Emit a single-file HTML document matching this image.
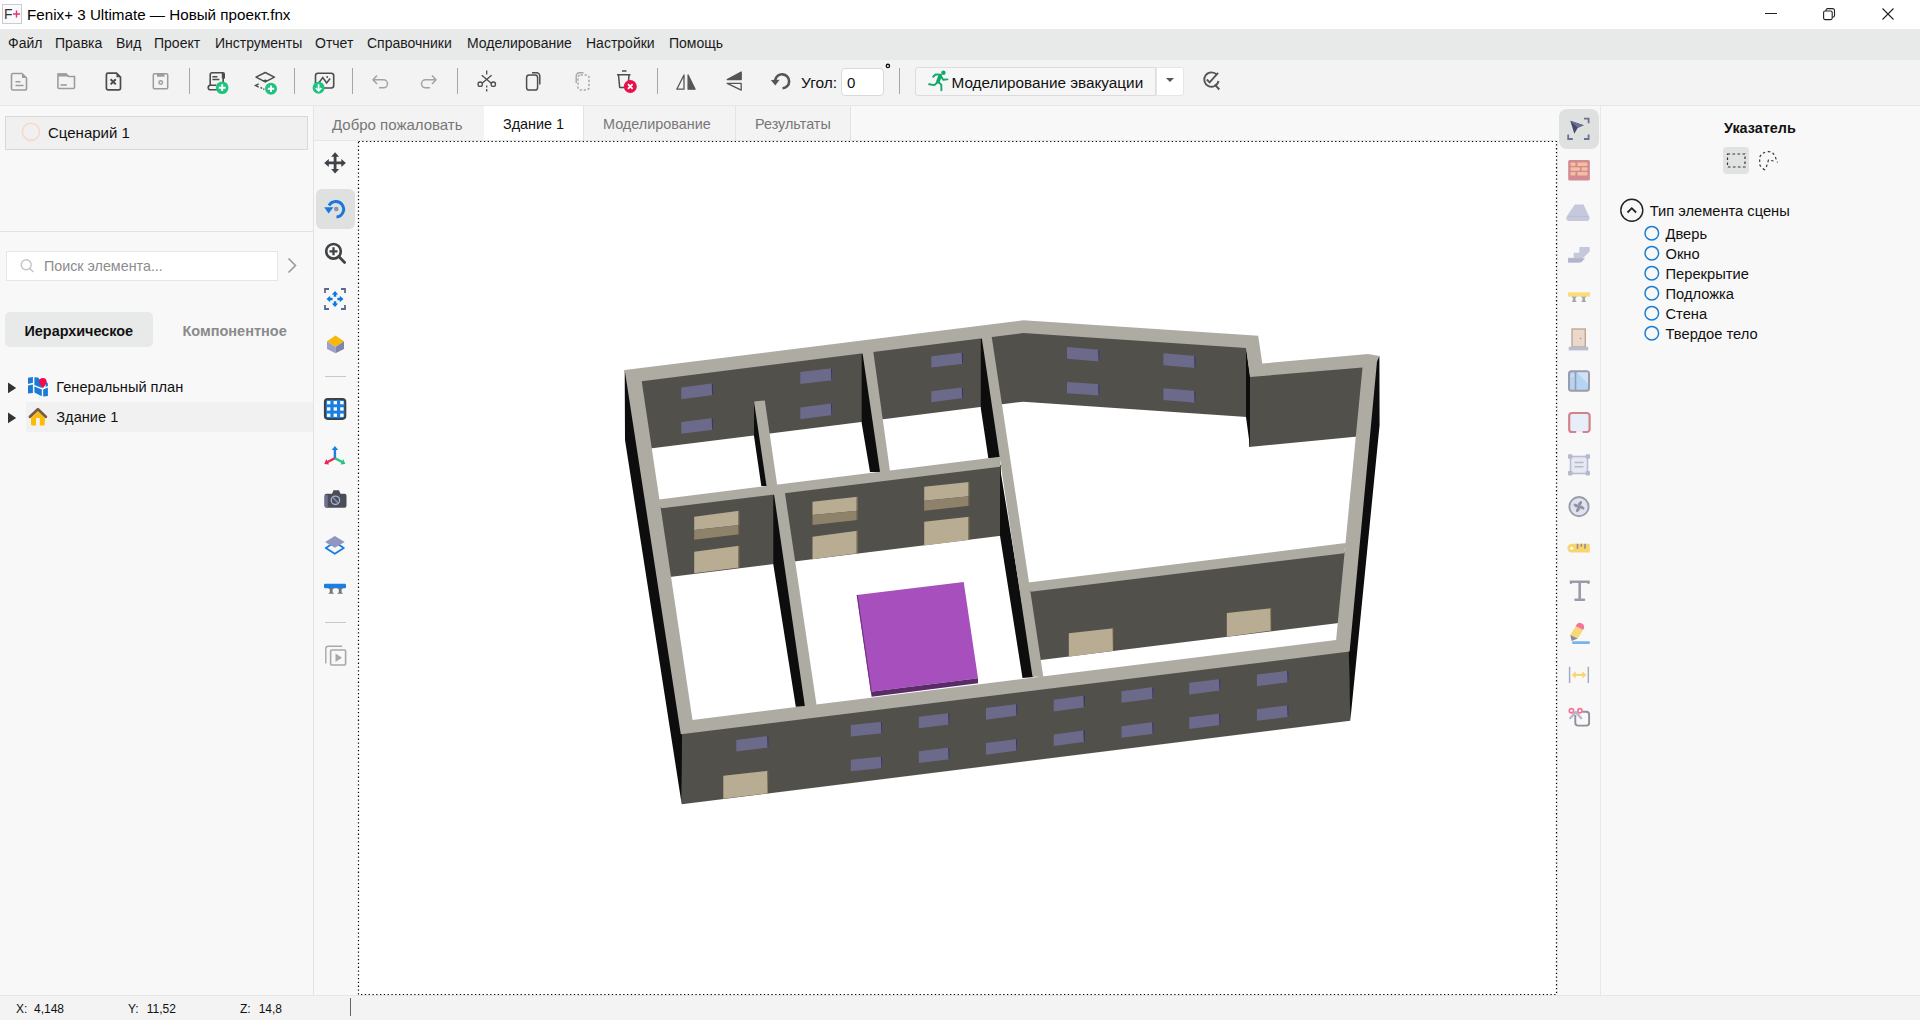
<!DOCTYPE html>
<html><head><meta charset="utf-8"><style>
html,body{margin:0;padding:0;width:1920px;height:1020px;overflow:hidden;background:#f8f8f8;font-family:"Liberation Sans", sans-serif;}
</style></head><body>
<div style="position:absolute;left:0px;top:0px;width:1920px;height:29px;background:#ffffff;"></div><div style="position:absolute;left:0px;top:29px;width:1920px;height:31px;background:#e8e9e9;"></div><div style="position:absolute;left:0px;top:60px;width:1920px;height:45px;background:#f3f3f3;"></div><div style="position:absolute;left:0px;top:105px;width:1920px;height:1px;background:#e6e7e7;"></div><div style="position:absolute;left:0px;top:106px;width:1920px;height:889px;background:#f8f8f8;"></div><div style="position:absolute;left:313px;top:106px;width:1px;height:889px;background:#e3e3e3;"></div><div style="position:absolute;left:1600px;top:106px;width:1px;height:889px;background:#e8e8e8;"></div><div style="position:absolute;left:1557px;top:141px;width:1px;height:854px;background:#ececec;"></div><div style="position:absolute;left:0px;top:995px;width:1920px;height:1px;background:#e6e6e6;"></div><div style="position:absolute;left:0px;top:996px;width:1920px;height:24px;background:#f3f3f3;"></div><div style="position:absolute;left:314px;top:106px;width:537px;height:34px;background:#f3f3f3;"></div><div style="position:absolute;left:484px;top:106px;width:99px;height:34px;background:#ffffff;"></div><div style="position:absolute;left:583px;top:106px;width:1px;height:34px;background:#e3e3e3;"></div><div style="position:absolute;left:735px;top:106px;width:1px;height:34px;background:#e3e3e3;"></div><div style="position:absolute;left:850px;top:106px;width:1px;height:34px;background:#e3e3e3;"></div><div style="position:absolute;left:314px;top:140px;width:1243px;height:1px;background:#e5e7e7;"></div><div style="position:absolute;left:358px;top:141px;width:1199px;height:853.5px;background:#ffffff;"></div><svg style="position:absolute;left:0;top:0" width="1920" height="1020"><rect x="358.5" y="141.5" width="1198" height="853" fill="none" stroke="#000" stroke-width="1.2" stroke-dasharray="1.3 2.5"/></svg><div style="position:absolute;left:27px;top:7.13px;font-size:15.2px;line-height:15.2px;color:#000;font-weight:400;white-space:nowrap;">Fenix+ 3 Ultimate — Новый проект.fnx</div><svg style="position:absolute;left:2px;top:4px;overflow:visible" width="20" height="20" viewBox="0 0 20 20"><rect x="0.5" y="0.5" width="19" height="19" fill="#fafafa" stroke="#c9cbd6"/><text x="2" y="15" font-family="Liberation Sans" font-size="14" fill="#333">F</text><path d="M11 10h7M14.5 6.5v7" stroke="#e8336b" stroke-width="1.4"/></svg><svg style="position:absolute;left:1765px;top:13px;overflow:visible" width="12" height="1" viewBox="0 0 12 1"><rect x="0" y="0" width="12" height="1" fill="#222"/></svg><svg style="position:absolute;left:1823px;top:8px;overflow:visible" width="12" height="12" viewBox="0 0 12 12"><rect x="0.6" y="3" width="8.6" height="8.6" rx="1.5" fill="none" stroke="#222" stroke-width="1.1"/><path d="M3 3 V2.2 a1.6 1.6 0 0 1 1.6 -1.6 H9.5 a2 2 0 0 1 2 2 V7.6 a1.6 1.6 0 0 1 -1.6 1.6 H9.2" fill="none" stroke="#222" stroke-width="1.1"/></svg><svg style="position:absolute;left:1882px;top:8px;overflow:visible" width="12" height="12" viewBox="0 0 12 12"><path d="M0.5 0.5 L11.5 11.5 M11.5 0.5 L0.5 11.5" stroke="#222" stroke-width="1.1"/></svg><div style="position:absolute;left:8px;top:36.25px;font-size:14px;line-height:14px;color:#1a1a1a;font-weight:400;white-space:nowrap;">Файл</div><div style="position:absolute;left:55px;top:36.25px;font-size:14px;line-height:14px;color:#1a1a1a;font-weight:400;white-space:nowrap;">Правка</div><div style="position:absolute;left:116px;top:36.25px;font-size:14px;line-height:14px;color:#1a1a1a;font-weight:400;white-space:nowrap;">Вид</div><div style="position:absolute;left:154px;top:36.25px;font-size:14px;line-height:14px;color:#1a1a1a;font-weight:400;white-space:nowrap;">Проект</div><div style="position:absolute;left:215px;top:36.25px;font-size:14px;line-height:14px;color:#1a1a1a;font-weight:400;white-space:nowrap;">Инструменты</div><div style="position:absolute;left:315px;top:36.25px;font-size:14px;line-height:14px;color:#1a1a1a;font-weight:400;white-space:nowrap;">Отчет</div><div style="position:absolute;left:367px;top:36.25px;font-size:14px;line-height:14px;color:#1a1a1a;font-weight:400;white-space:nowrap;">Справочники</div><div style="position:absolute;left:467px;top:36.25px;font-size:14px;line-height:14px;color:#1a1a1a;font-weight:400;white-space:nowrap;">Моделирование</div><div style="position:absolute;left:586px;top:36.25px;font-size:14px;line-height:14px;color:#1a1a1a;font-weight:400;white-space:nowrap;">Настройки</div><div style="position:absolute;left:669px;top:36.25px;font-size:14px;line-height:14px;color:#1a1a1a;font-weight:400;white-space:nowrap;">Помощь</div><svg style="position:absolute;left:0px;top:0px;overflow:visible" width="1" height="1" viewBox="0 0 1 1"><path d="M13 73.5 h9 l4.5 4.5 v10.5 a1.5 1.5 0 0 1 -1.5 1.5 h-12 a1.5 1.5 0 0 1 -1.5 -1.5 v-13.5 a1.5 1.5 0 0 1 1.5 -1.5z" fill="none" stroke="#9c9c9c" stroke-width="1.6"/><path d="M22 73.5 l4.5 4.5 h-4.5z" fill="#9c9c9c"/><path d="M15.5 81.7 h5 M15.5 85.5 h8" stroke="#9c9c9c" stroke-width="1.6"/></svg><svg style="position:absolute;left:0px;top:0px;overflow:visible" width="1" height="1" viewBox="0 0 1 1"><path d="M58 74 h8 l2.5 2.5 h6 v11 a1 1 0 0 1 -1 1 h-14.6 a1 1 0 0 1 -1 -1z" fill="none" stroke="#9c9c9c" stroke-width="1.6"/><path d="M58 73.5 h8.5 l3 3 h-11.5z" fill="#9c9c9c"/><path d="M60.5 85 h6.3" stroke="#9c9c9c" stroke-width="1.6"/></svg><svg style="position:absolute;left:0px;top:0px;overflow:visible" width="1" height="1" viewBox="0 0 1 1"><path d="M108 73.2 h8.5 l4 4 v11 a1.6 1.6 0 0 1 -1.6 1.6 h-10.9 a1.6 1.6 0 0 1 -1.6 -1.6 v-13.4 a1.6 1.6 0 0 1 1.6 -1.6z" fill="none" stroke="#4d4d4d" stroke-width="1.7"/><path d="M116.5 73.2 l4 4 h-4z" fill="#4d4d4d"/><path d="M110.6 79.2 l5.2 5.2 M115.8 79.2 l-5.2 5.2" stroke="#4d4d4d" stroke-width="2"/></svg><svg style="position:absolute;left:0px;top:0px;overflow:visible" width="1" height="1" viewBox="0 0 1 1"><path d="M154.5 73.8 h12 a1.2 1.2 0 0 1 1.2 1.2 v12.6 a1.2 1.2 0 0 1 -1.2 1.2 h-12 a1.2 1.2 0 0 1 -1.2 -1.2 v-12.6 a1.2 1.2 0 0 1 1.2 -1.2z" fill="none" stroke="#9c9c9c" stroke-width="1.5"/><rect x="157" y="73.5" width="7.5" height="3.2" fill="#9c9c9c"/><circle cx="160.7" cy="82.5" r="1.8" fill="none" stroke="#9c9c9c" stroke-width="1.4"/></svg><div style="position:absolute;left:189.0px;top:68px;width:1.2px;height:26px;background:#a6a6a6;"></div><div style="position:absolute;left:294.0px;top:68px;width:1.2px;height:26px;background:#a6a6a6;"></div><div style="position:absolute;left:352.0px;top:68px;width:1.2px;height:26px;background:#a6a6a6;"></div><div style="position:absolute;left:457.0px;top:68px;width:1.2px;height:26px;background:#a6a6a6;"></div><div style="position:absolute;left:657.0px;top:68px;width:1.2px;height:26px;background:#a6a6a6;"></div><div style="position:absolute;left:898.5px;top:68px;width:1.2px;height:26px;background:#a6a6a6;"></div><svg style="position:absolute;left:0px;top:0px;overflow:visible" width="1" height="1" viewBox="0 0 1 1"><path d="M210.2 86 V74.7 a2 2 0 0 1 2 -2 H223" fill="none" stroke="#4d4d4d" stroke-width="1.6"/><path d="M221.8 72 h1.2 a2 2 0 0 1 2 2 v4.6 h-3.2z" fill="#4d4d4d"/><path d="M223.2 78 V84 M217.5 89.8 h-7 a2.3 2.3 0 0 1 0 -4.6 h6" fill="none" stroke="#4d4d4d" stroke-width="1.6"/><path d="M212.4 76.8 h5 M212.4 79.4 h7" stroke="#4d4d4d" stroke-width="1.5"/><circle cx="222.2" cy="87.7" r="6.3" fill="#1ec47e"/><path d="M222.2 84.3 v6.8 M218.8 87.7 h6.8" stroke="#fff" stroke-width="1.9"/></svg><svg style="position:absolute;left:0px;top:0px;overflow:visible" width="1" height="1" viewBox="0 0 1 1"><path d="M265.2 72.5 l9.2 4.6 l-9.2 4.8 l-9.2 -4.8z" fill="none" stroke="#4d4d4d" stroke-width="1.5" stroke-linejoin="round"/><path d="M262.3 80.6 l2.9 -1.2 l2.9 1.2 l-2.9 1.6z" fill="#4d4d4d"/><path d="M258.7 83.9 l-3.2 1.6 l3.2 1.6 M260.5 87.5 l1.6 0.8 M263.2 88.8 l1.2 0.6" fill="none" stroke="#4d4d4d" stroke-width="1.4"/><circle cx="271" cy="88.8" r="6" fill="#1ec47e"/><path d="M271 85.6 v6.4 M267.8 88.8 h6.4" stroke="#fff" stroke-width="1.9"/></svg><svg style="position:absolute;left:0px;top:0px;overflow:visible" width="1" height="1" viewBox="0 0 1 1"><rect x="315.5" y="73.2" width="18.2" height="14.8" rx="2.5" fill="none" stroke="#4d4d4d" stroke-width="1.6"/><path d="M318 84 l4.8 -6.5 l3.8 5.5 l3.5 -4.5" fill="none" stroke="#4d4d4d" stroke-width="1.5"/><circle cx="327.2" cy="77" r="0.9" fill="#4d4d4d"/><circle cx="318.6" cy="87.7" r="6" fill="#1ec47e"/><path d="M318.6 84.2 v6.4 M315.8 88 l2.8 2.8 l2.8 -2.8" fill="none" stroke="#fff" stroke-width="1.7"/></svg><svg style="position:absolute;left:0px;top:0px;overflow:visible" width="1" height="1" viewBox="0 0 1 1"><path d="M373 79.8 h10.5 a4 4 0 0 1 0 8 h-4.5 M377 75.5 l-4 4.3 l4 4.3" fill="none" stroke="#a3a3a3" stroke-width="1.5" stroke-linejoin="round"/></svg><svg style="position:absolute;left:0px;top:0px;overflow:visible" width="1" height="1" viewBox="0 0 1 1"><path d="M436 79.8 h-10.5 a4 4 0 0 0 0 8 h4.5 M432 75.5 l4 4.3 l-4 4.3" fill="none" stroke="#a3a3a3" stroke-width="1.5" stroke-linejoin="round"/></svg><svg style="position:absolute;left:0px;top:0px;overflow:visible" width="1" height="1" viewBox="0 0 1 1"><path d="M486.7 70.6 v4 M486.7 85.5 v2 M486.7 89 v2.5" stroke="#4d4d4d" stroke-width="1.3"/><path d="M481.8 75.2 l9.5 8 M491.6 75.2 l-9.5 8" stroke="#4d4d4d" stroke-width="1.3"/><circle cx="480.2" cy="84.2" r="2.2" fill="none" stroke="#4d4d4d" stroke-width="1.3"/><circle cx="493.3" cy="84.2" r="2.2" fill="none" stroke="#4d4d4d" stroke-width="1.3"/></svg><svg style="position:absolute;left:0px;top:0px;overflow:visible" width="1" height="1" viewBox="0 0 1 1"><rect x="526.6" y="75" width="11" height="15" rx="2.6" fill="none" stroke="#4d4d4d" stroke-width="1.5"/><path d="M532 72.8 h4.5 a3.2 3.2 0 0 1 3.3 3.2 v8.6" fill="none" stroke="#4d4d4d" stroke-width="1.5"/></svg><svg style="position:absolute;left:0px;top:0px;overflow:visible" width="1" height="1" viewBox="0 0 1 1"><rect x="578" y="75" width="11" height="15" rx="2.6" fill="none" stroke="#a8a8a8" stroke-width="1.5" stroke-dasharray="2.2 1.8"/><path d="M583.5 72.8 h-4 a3.2 3.2 0 0 0 -3.3 3.2 v7" fill="none" stroke="#a8a8a8" stroke-width="1.4"/></svg><svg style="position:absolute;left:0px;top:0px;overflow:visible" width="1" height="1" viewBox="0 0 1 1"><path d="M622 71 h4.5 M617 74.8 h13.5 M618.5 75 l1.2 12.5 h4.5 M629 75 l-0.5 6" fill="none" stroke="#4d4d4d" stroke-width="1.5" stroke-linejoin="round"/><circle cx="630.3" cy="86.5" r="6.5" fill="#e8104a"/><path d="M628 84.2 l4.6 4.6 M632.6 84.2 l-4.6 4.6" stroke="#fff" stroke-width="1.8"/></svg><svg style="position:absolute;left:0px;top:0px;overflow:visible" width="1" height="1" viewBox="0 0 1 1"><path d="M684 75 l-7.2 14.2 h7.2z" fill="none" stroke="#555" stroke-width="1.3" stroke-linejoin="round"/><path d="M688.1 75 l7 14.2 h-7z" fill="#555" stroke="#555" stroke-width="1.3" stroke-linejoin="round"/></svg><svg style="position:absolute;left:0px;top:0px;overflow:visible" width="1" height="1" viewBox="0 0 1 1"><path d="M741.2 72 v7.5 h-14z" fill="#555" stroke="#555" stroke-width="1.3" stroke-linejoin="round"/><path d="M727.2 83.3 h14 v6.8z" fill="none" stroke="#555" stroke-width="1.3" stroke-linejoin="round"/></svg><svg style="position:absolute;left:0px;top:0px;overflow:visible" width="1" height="1" viewBox="0 0 1 1"><path d="M775.2 80.3 A7 7 0 1 1 782.5 88.3" fill="none" stroke="#555" stroke-width="2.6"/><path d="M770.8 80 l8.8 -0.2 l-4.3 5.6z" fill="#555"/></svg><div style="position:absolute;left:801px;top:74.58px;font-size:15.5px;line-height:15.5px;color:#111;font-weight:400;white-space:nowrap;">Угол:</div><div style="position:absolute;left:840.5px;top:67.5px;width:41.5px;height:26.5px;background:#fff;border:1px solid #dadada;border-radius:4px"></div><div style="position:absolute;left:847px;top:75.00px;font-size:15px;line-height:15px;color:#111;font-weight:400;white-space:nowrap;">0</div><svg style="position:absolute;left:0px;top:0px;overflow:visible" width="1" height="1" viewBox="0 0 1 1"><circle cx="887.9" cy="65.9" r="1.65" fill="none" stroke="#111" stroke-width="1.3"/></svg><div style="position:absolute;left:914.5px;top:66.5px;width:239.5px;height:27.5px;background:#f6f6f6;border:1px solid #dcdcdc;border-radius:3px 0 0 3px"></div><div style="position:absolute;left:1156px;top:66.5px;width:26px;height:27.5px;background:#fff;border:1px solid #e6e6e6;border-radius:0 3px 3px 0"></div><svg style="position:absolute;left:0px;top:0px;overflow:visible" width="1" height="1" viewBox="0 0 1 1"><path d="M1166 78 h8 l-4 4z" fill="#555"/></svg><div style="position:absolute;left:951.5px;top:74.75px;font-size:15.3px;line-height:15.3px;color:#111;font-weight:400;white-space:nowrap;">Моделирование эвакуации</div><svg style="position:absolute;left:0px;top:0px;overflow:visible" width="1" height="1" viewBox="0 0 1 1"><circle cx="943.4" cy="72.7" r="2.2" fill="#12a86c"/><path d="M940.3 75.5 L937.9 81.6" stroke="#12a86c" stroke-width="3.6" stroke-linecap="round"/><path d="M933.2 76.8 L935.6 74.5 L940 74.6 L943.2 79.8 L947.4 79.4 M937.9 81.8 L934.4 85.1 L929.1 84.3 M938.4 81.8 L941.3 84.9 L941.4 90.2" fill="none" stroke="#12a86c" stroke-width="1.9" stroke-linecap="round" stroke-linejoin="round"/></svg><svg style="position:absolute;left:0px;top:0px;overflow:visible" width="1" height="1" viewBox="0 0 1 1"><path d="M1217 75 a7.2 7.2 0 1 0 1.5 6" fill="none" stroke="#555" stroke-width="1.9"/><path d="M1206.8 79.5 l2.8 2.8 l8.5 -9.5 M1214.8 84.5 l4.5 5" fill="none" stroke="#555" stroke-width="1.9"/></svg><div style="position:absolute;left:332px;top:116.60px;font-size:15px;line-height:15px;color:#777;font-weight:400;white-space:nowrap;">Добро пожаловать</div><div style="position:absolute;left:503px;top:117.11px;font-size:14.4px;line-height:14.4px;color:#111;font-weight:400;white-space:nowrap;">Здание 1</div><div style="position:absolute;left:603px;top:117.11px;font-size:14.4px;line-height:14.4px;color:#777;font-weight:400;white-space:nowrap;">Моделирование</div><div style="position:absolute;left:755px;top:117.11px;font-size:14.4px;line-height:14.4px;color:#777;font-weight:400;white-space:nowrap;">Результаты</div><div style="position:absolute;left:5px;top:116px;width:301px;height:32px;background:#f0f0f0;border:1px solid #d8d8d8"></div><svg style="position:absolute;left:0px;top:0px;overflow:visible" width="1" height="1" viewBox="0 0 1 1"><circle cx="31" cy="131.8" r="8.6" fill="none" stroke="#f6d9cb" stroke-width="1.6"/></svg><div style="position:absolute;left:48px;top:125.00px;font-size:15px;line-height:15px;color:#111;font-weight:400;white-space:nowrap;">Сценарий 1</div><div style="position:absolute;left:0px;top:231px;width:313px;height:1px;background:#e2e2e2;"></div><div style="position:absolute;left:5.5px;top:250.5px;width:270px;height:28.5px;background:#fff;border:1px solid #e6e6e6"></div><svg style="position:absolute;left:0px;top:0px;overflow:visible" width="1" height="1" viewBox="0 0 1 1"><circle cx="26.2" cy="264.8" r="5" fill="none" stroke="#c4c4c4" stroke-width="1.4"/><path d="M29.8 268.5 l3.5 3.5" stroke="#c4c4c4" stroke-width="1.5"/><path d="M288.5 258.5 l7 7 l-7 7" fill="none" stroke="#9a9a9a" stroke-width="1.6"/></svg><div style="position:absolute;left:44px;top:259.40px;font-size:14.3px;line-height:14.3px;color:#8c8c8c;font-weight:400;white-space:nowrap;">Поиск элемента...</div><div style="position:absolute;left:5px;top:312px;width:148px;height:34.5px;background:#e8e9e9;border-radius:5px"></div><div style="position:absolute;left:24.5px;top:323.61px;font-size:14.4px;line-height:14.4px;color:#111;font-weight:700;white-space:nowrap;">Иерархическое</div><div style="position:absolute;left:182.5px;top:323.53px;font-size:14.5px;line-height:14.5px;color:#8a8a8a;font-weight:700;white-space:nowrap;">Компонентное</div><div style="position:absolute;left:26px;top:402px;width:287px;height:30px;background:#f1f1f1;"></div><svg style="position:absolute;left:0px;top:0px;overflow:visible" width="1" height="1" viewBox="0 0 1 1"><path d="M8 382.5 l8.2 5.4 l-8.2 5.4z" fill="#333"/><path d="M8 412.5 l8.2 5.4 l-8.2 5.4z" fill="#333"/></svg><div style="position:absolute;left:56.3px;top:380.14px;font-size:14.6px;line-height:14.6px;color:#111;font-weight:400;white-space:nowrap;">Генеральный план</div><div style="position:absolute;left:56.3px;top:410.44px;font-size:14.6px;line-height:14.6px;color:#111;font-weight:400;white-space:nowrap;">Здание 1</div><svg style="position:absolute;left:0px;top:0px;overflow:visible" width="1" height="1" viewBox="0 0 1 1"><path d="M28 377.8 l4.9 -0.9 v5.9 l-4.9 1.2z M28 385.6 l4.9 -1.2 v8.5 l-4.9 0.7z M34.4 377.2 l3.6 0.4 l3.8 4.5 v6 l-7.4 -3.2z M34.4 386.4 l7.4 3.2 v6.6 l-7.4 -3.6z M43.2 389.4 l4.7 -2 v8.6 l-4.7 0.6z M45.6 381 l2.3 2.5 v2.6 l-2.3 1z" fill="#1a7ad8"/><path d="M42.9 378 a3.7 3.7 0 0 1 3.7 3.7 c0 2.5 -3.7 6.3 -3.7 6.3 c0 0 -3.7 -3.8 -3.7 -6.3 a3.7 3.7 0 0 1 3.7 -3.7z" fill="#f5094c"/></svg><svg style="position:absolute;left:0px;top:0px;overflow:visible" width="1" height="1" viewBox="0 0 1 1"><path d="M31 418 l6.9 -6.6 l6.9 6.6 v6 a1.5 1.5 0 0 1 -1.5 1.5 h-3.5 v-7.6 h-3.8 v7.6 h-3.5 a1.5 1.5 0 0 1 -1.5 -1.5z" fill="#fbbc05"/><path d="M30 416.8 l7.9 -7.5 l7.9 7.5" fill="none" stroke="#7b5a42" stroke-width="2.8" stroke-linejoin="round" stroke-linecap="round"/></svg><div style="position:absolute;left:316px;top:189px;width:39px;height:40px;background:#dfe0e0;border-radius:6px"></div><svg style="position:absolute;left:0px;top:0px;overflow:visible" width="1" height="1" viewBox="0 0 1 1"><path d="M335.1 155.5 v15 M327.5 162.9 h15.2" stroke="#3f4347" stroke-width="2.8"/><path d="M335.1 152.2 l-4 4.6 h8z M335.1 173.6 l-4 -4.6 h8z M324.2 162.9 l4.6 -4 v8z M345.9 162.9 l-4.6 -4 v8z" fill="#3f4347"/></svg><svg style="position:absolute;left:0px;top:0px;overflow:visible" width="1" height="1" viewBox="0 0 1 1"><path d="M329 205.5 A7.8 7.8 0 1 1 336.5 217" fill="none" stroke="#1a78dc" stroke-width="2.9"/><path d="M324.2 207.3 h9.2 l-4.8 6.3z" fill="#1a78dc"/><circle cx="336.3" cy="209" r="2.3" fill="#8a90ad"/></svg><svg style="position:absolute;left:0px;top:0px;overflow:visible" width="1" height="1" viewBox="0 0 1 1"><circle cx="333.5" cy="251.3" r="7.3" fill="none" stroke="#3f4347" stroke-width="2.6"/><path d="M338.8 256.6 l5.8 5.8" stroke="#3f4347" stroke-width="2.8" stroke-linecap="round"/><path d="M333.5 247.3 v8 M329.5 251.3 h8" stroke="#3f4347" stroke-width="2.3"/></svg><svg style="position:absolute;left:0px;top:0px;overflow:visible" width="1" height="1" viewBox="0 0 1 1"><path d="M325 293 v-4 h4 M341 289 h4 v4 M345 305 v4 h-4 M329 309 h-4 v-4" fill="none" stroke="#5f668c" stroke-width="1.8"/><path d="M335 290.9 l3.2 3.6 h-1.9 v2.3 h-2.6 v-2.3 h-1.9z M335 307.1 l3.2 -3.6 h-1.9 v-2.3 h-2.6 v2.3 h-1.9z M326.5 299 l3.7 -3.2 v1.9 h2.4 v2.6 h-2.4 v1.9z M343.5 299 l-3.7 -3.2 v1.9 h-2.4 v2.6 h2.4 v1.9z" fill="#0a78dc"/></svg><svg style="position:absolute;left:0px;top:0px;overflow:visible" width="1" height="1" viewBox="0 0 1 1"><path d="M335.5 335.5 l8.5 5.7 l-8.5 5.7 l-8.5 -5.7z" fill="#f6b80a"/><path d="M327 341.2 l8.5 5.7 v6.4 l-8.5 -4.3z" fill="#9aa2cc"/><path d="M344 341.2 l-8.5 5.7 v6.4 l8.5 -4.3z" fill="#7d85ad"/></svg><div style="position:absolute;left:325px;top:376px;width:21px;height:1px;background:#c8c8c8;"></div><svg style="position:absolute;left:0px;top:0px;overflow:visible" width="1" height="1" viewBox="0 0 1 1"><rect x="324.9" y="398.9" width="20.4" height="20" rx="2.8" fill="#1a7fe0" stroke="#3c4043" stroke-width="2"/><path d="M326 405.3 h18.5 M326 411.6 h18.5 M331.4 399.5 v19 M338 399.5 v19" stroke="#1a7fe0" stroke-width="1.4"/><rect x="327.0" y="401.0" width="3.4" height="3.3" fill="#fff"/><rect x="327.0" y="407.3" width="3.4" height="3.3" fill="#fff"/><rect x="327.0" y="413.6" width="3.4" height="3.3" fill="#fff"/><rect x="333.6" y="401.0" width="3.4" height="3.3" fill="#fff"/><rect x="333.6" y="407.3" width="3.4" height="3.3" fill="#fff"/><rect x="333.6" y="413.6" width="3.4" height="3.3" fill="#fff"/><rect x="340.2" y="401.0" width="3.4" height="3.3" fill="#fff"/><rect x="340.2" y="407.3" width="3.4" height="3.3" fill="#fff"/><rect x="340.2" y="413.6" width="3.4" height="3.3" fill="#fff"/></svg><svg style="position:absolute;left:0px;top:0px;overflow:visible" width="1" height="1" viewBox="0 0 1 1"><path d="M334.9 458.5 v-9" stroke="#1a7fe0" stroke-width="2.4"/><path d="M334.9 446 l-3.3 4 h6.6z" fill="#1a7fe0"/><path d="M334.9 458.2 l-7.8 4" stroke="#ef2456" stroke-width="2.4"/><path d="M324.3 463.9 l2 -4.8 l2.8 5.3z" fill="#ef2456"/><path d="M334.9 458.2 l7.8 4" stroke="#22c47f" stroke-width="2.4"/><path d="M345.3 463.9 l-2 -4.8 l-2.8 5.3z" fill="#22c47f"/></svg><svg style="position:absolute;left:0px;top:0px;overflow:visible" width="1" height="1" viewBox="0 0 1 1"><path d="M326.5 493.8 h5.5 l1.5 -3.5 h5.5 l1.5 3.5 h4 a2 2 0 0 1 2 2 v10 a2 2 0 0 1 -2 2 h-18 a2 2 0 0 1 -2 -2 v-10 a2 2 0 0 1 2 -2z" fill="#4a4e55"/><rect x="324.6" y="495" width="3.2" height="12" rx="1" fill="#6b7194"/><circle cx="335.4" cy="500.3" r="4.2" fill="#4a4e55" stroke="#a9b0df" stroke-width="1.3"/><path d="M333 497.5 l5 5.5" stroke="#8a90ad" stroke-width="1.5"/></svg><svg style="position:absolute;left:0px;top:0px;overflow:visible" width="1" height="1" viewBox="0 0 1 1"><path d="M325.8 548 l9 -6 l9 6 l-9 5.8z" fill="none" stroke="#1a7fe0" stroke-width="1.9" stroke-linejoin="round"/><path d="M334.8 536 l9.9 5.9 l-9.9 5.9 l-9.7 -5.9z" fill="#8f96c2"/></svg><svg style="position:absolute;left:0px;top:0px;overflow:visible" width="1" height="1" viewBox="0 0 1 1"><rect x="324" y="583.8" width="22" height="4.4" rx="1.2" fill="#1a7fe0"/><path d="M328.2 588 h6 l-1.6 1.6 v2.6 l1.6 1.6 h-6 l1.6 -1.6 v-2.6z M337.2 588 h6 l-1.6 1.6 v2.6 l1.6 1.6 h-6 l1.6 -1.6 v-2.6z" fill="#777"/></svg><div style="position:absolute;left:325px;top:622px;width:21px;height:1px;background:#c8c8c8;"></div><svg style="position:absolute;left:0px;top:0px;overflow:visible" width="1" height="1" viewBox="0 0 1 1"><path d="M325.8 663.5 v-15 a2.3 2.3 0 0 1 2.3 -2.3 h14" fill="none" stroke="#a8a8a8" stroke-width="1.4"/><rect x="330.6" y="650" width="15" height="15" rx="1" fill="none" stroke="#a8a8a8" stroke-width="1.6"/><path d="M335.5 653.5 l6.5 4.2 l-6.5 4.2z" fill="#a8a8a8"/></svg><div style="position:absolute;left:1559px;top:109px;width:40px;height:40px;background:#dfe0e0;border-radius:8px"></div><svg style="position:absolute;left:0px;top:0px;overflow:visible" width="1" height="1" viewBox="0 0 1 1"><path d="M1568.2 134.4 v4.6 h4.6 M1584 139 h4.6 v-4.6 M1584 118.6 h4.6 v4.6" fill="none" stroke="#6b7194" stroke-width="1.8"/><path d="M1570.3 120.8 l13.5 4.5 l-6 2.5 l-3.5 6z" fill="#444a6a"/><path d="M1570.3 120.8 l13.5 4.5 l-6 2.5z" fill="#6b7194"/></svg><svg style="position:absolute;left:0px;top:0px;overflow:visible" width="1" height="1" viewBox="0 0 1 1"><rect x="1568.2" y="160" width="21.7" height="20.6" rx="1.5" fill="#d48a91"/><rect x="1570.5" y="162.5" width="5" height="3.4" rx="1.2" fill="#f2bfa0"/><rect x="1577.3" y="162.5" width="10.2" height="3.4" rx="1.2" fill="#f2bfa0"/><rect x="1570.5" y="167.3" width="9.5" height="3.4" rx="1.2" fill="#f2bfa0"/><rect x="1581.5" y="167.3" width="6" height="3.4" rx="1.2" fill="#f2bfa0"/><rect x="1570.5" y="172.1" width="5" height="3.4" rx="1.2" fill="#f2bfa0"/><rect x="1577.3" y="172.1" width="10.2" height="3.4" rx="1.2" fill="#f2bfa0"/></svg><svg style="position:absolute;left:0px;top:0px;overflow:visible" width="1" height="1" viewBox="0 0 1 1"><path d="M1574.8 204.6 h8.8 l5.4 11.6 a3 3 0 0 1 -2.6 4.8 h-17 a3 3 0 0 1 -2.6 -4.8z" fill="#c6c9dd"/><path d="M1568 216.5 h21" stroke="#b7bbd4" stroke-width="0.8"/></svg><svg style="position:absolute;left:0px;top:0px;overflow:visible" width="1" height="1" viewBox="0 0 1 1"><path d="M1568.1 262.4 v-4.6 h5.6 v-5 h5.6 v-5.8 h10.4 v4.6 l-11.2 10.8z" fill="#c5c8dc"/><path d="M1568.1 262.4 v-4.2 h17 l-4.2 4.2z" fill="#b0b4cd"/></svg><svg style="position:absolute;left:0px;top:0px;overflow:visible" width="1" height="1" viewBox="0 0 1 1"><rect x="1568" y="292.3" width="22" height="4.3" fill="#f9dc78"/><path d="M1571.5 296.6 h5.4 l-1.4 1.4 v2.6 l1.4 1.4 h-5.4 l1.4 -1.4 v-2.6z M1581 296.6 h5.4 l-1.4 1.4 v2.6 l1.4 1.4 h-5.4 l1.4 -1.4 v-2.6z" fill="#a6a6a8"/></svg><svg style="position:absolute;left:0px;top:0px;overflow:visible" width="1" height="1" viewBox="0 0 1 1"><rect x="1572" y="329" width="13.3" height="18" fill="#ead8ca" stroke="#bfa796" stroke-width="1.4"/><circle cx="1580.6" cy="338.5" r="0.8" fill="#a08d80"/><rect x="1568.7" y="346.8" width="19.5" height="3.6" fill="#b9bdd0"/></svg><svg style="position:absolute;left:0px;top:0px;overflow:visible" width="1" height="1" viewBox="0 0 1 1"><rect x="1569" y="371.2" width="20" height="19.6" rx="2.5" fill="#b5d3f2" stroke="#9b9ba9" stroke-width="2"/><path d="M1575.5 371.5 v19" stroke="#9b9ba9" stroke-width="1.6"/><path d="M1577 372.5 l11 11.5 v-11.5z" fill="#cfe2f7"/><rect x="1571.5" y="374.5" width="2.4" height="2.4" fill="#cfe2f7"/></svg><svg style="position:absolute;left:0px;top:0px;overflow:visible" width="1" height="1" viewBox="0 0 1 1"><path d="M1576.2 432 h-4.2 a2.8 2.8 0 0 1 -2.8 -2.8 v-13.4 a2.8 2.8 0 0 1 2.8 -2.8 h14.8 a2.8 2.8 0 0 1 2.8 2.8 v13.4 a2.8 2.8 0 0 1 -2.8 2.8 h-4.2" fill="#e7eefa" stroke="#d4828a" stroke-width="2.2"/></svg><svg style="position:absolute;left:0px;top:0px;overflow:visible" width="1" height="1" viewBox="0 0 1 1"><rect x="1570.5" y="456.5" width="17" height="17" fill="#e7e9f2" stroke="#b9bdcf" stroke-width="1.6"/><rect x="1568" y="454.3" width="4.4" height="4.4" rx="0.8" fill="#b5b9cc"/><rect x="1568" y="471" width="4.4" height="4.4" rx="0.8" fill="#b5b9cc"/><rect x="1585.6" y="454.3" width="4.4" height="4.4" rx="0.8" fill="#b5b9cc"/><rect x="1585.6" y="471" width="4.4" height="4.4" rx="0.8" fill="#b5b9cc"/><path d="M1574.5 462.5 h9 M1574.5 466.8 h9" stroke="#b5b9cc" stroke-width="1.6"/></svg><svg style="position:absolute;left:0px;top:0px;overflow:visible" width="1" height="1" viewBox="0 0 1 1"><circle cx="1579" cy="506.6" r="9.6" fill="#dfe3f0" stroke="#9b9ba9" stroke-width="1.9"/><path d="M1579 506.6 c-1 -3 0 -5 2.5 -5 c0 2 -1 4 -2.5 5 c3 -1 5 0 5 2.5 c-2 0 -4 -1 -5 -2.5 c1 3 0 5 -2.5 5 c0 -2 1 -4 2.5 -5 c-3 1 -5 0 -5 -2.5 c2 0 4 1 5 2.5z" fill="#8f8f9e" stroke="#8f8f9e" stroke-width="1"/></svg><svg style="position:absolute;left:0px;top:0px;overflow:visible" width="1" height="1" viewBox="0 0 1 1"><path d="M1571.8 543.8 h18 v8.8 h-18 a4.4 4.4 0 0 1 0 -8.8z" fill="#f9d46f"/><circle cx="1571.7" cy="548.2" r="1.5" fill="#fff"/><path d="M1577.5 543.8 v5 M1581.3 543.8 v3 M1585 543.8 v5" stroke="#8f8f9e" stroke-width="1.6"/></svg><svg style="position:absolute;left:0px;top:0px;overflow:visible" width="1" height="1" viewBox="0 0 1 1"><path d="M1571 582.8 v-1 h17.5 v1 M1579.7 582 v17.5 M1575.5 599.8 h8.5" fill="none" stroke="#9a9aa8" stroke-width="2.6" stroke-linecap="round"/></svg><svg style="position:absolute;left:0px;top:0px;overflow:visible" width="1" height="1" viewBox="0 0 1 1"><rect x="1572" y="641.3" width="18" height="2.7" rx="1.3" fill="#76b4ea"/><path d="M1575.6 626.2 L1583.2 629.8 L1577.8 638.6 L1570.3 635z" fill="#f8d877"/><path d="M1575.6 626.2 L1576.6 624.6 a4.2 4.2 0 0 1 7.4 3.6 L1583.2 629.8z" fill="#f67396"/><path d="M1570.3 635 L1577.8 638.6 L1571.6 640.9z" fill="#8b8b9f"/></svg><svg style="position:absolute;left:0px;top:0px;overflow:visible" width="1" height="1" viewBox="0 0 1 1"><path d="M1569.6 666.8 v16.2 M1588.3 666.8 v16.2" stroke="#a8abc0" stroke-width="1.5"/><path d="M1573 674.9 h12" stroke="#f9d46f" stroke-width="2"/><path d="M1571.8 674.9 l4 -3.6 v7.2z M1586.3 674.9 l-4 -3.6 v7.2z" fill="#f9d46f"/></svg><svg style="position:absolute;left:0px;top:0px;overflow:visible" width="1" height="1" viewBox="0 0 1 1"><path d="M1582.5 711.8 h3.8 a2.8 2.8 0 0 1 2.8 2.8 v8.2 a2.8 2.8 0 0 1 -2.8 2.8 h-8.2 a2.8 2.8 0 0 1 -2.8 -2.8 v-7.8" fill="none" stroke="#8f8f9e" stroke-width="1.9"/><path d="M1575.8 712 L1570.2 718.2 M1575.8 712 L1581.2 718.2" stroke="#b1b6c9" stroke-width="2.2" stroke-linecap="round"/><circle cx="1571.4" cy="710.7" r="2.1" fill="none" stroke="#f57399" stroke-width="1.7"/><circle cx="1579.9" cy="710.7" r="2.1" fill="none" stroke="#f57399" stroke-width="1.7"/></svg><div style="position:absolute;left:1724px;top:121.01px;font-size:14.4px;line-height:14.4px;color:#111;font-weight:700;white-space:nowrap;">Указатель</div><div style="position:absolute;left:1723.3px;top:147.2px;width:25.5px;height:26.5px;background:#e1e2e2;border-radius:4px"></div><svg style="position:absolute;left:0px;top:0px;overflow:visible" width="1" height="1" viewBox="0 0 1 1"><rect x="1727.5" y="154" width="17.5" height="13" fill="none" stroke="#333" stroke-width="1.2" stroke-dasharray="2.6 2.4"/><path d="M1764.5 170 L1760 165.5 L1759.5 157.5 Q1761.5 152.5 1768 151.5 Q1773.5 151.5 1775.5 157.5 L1777.5 162.5 M1773.5 161 L1768.5 160 L1766.5 166.5 L1764.5 170" fill="none" stroke="#333" stroke-width="1.2" stroke-dasharray="2.4 2.6"/></svg><svg style="position:absolute;left:0px;top:0px;overflow:visible" width="1" height="1" viewBox="0 0 1 1"><circle cx="1631.8" cy="210.2" r="11" fill="none" stroke="#222" stroke-width="1.4"/><path d="M1627.5 212.5 l4.3 -4.3 l4.3 4.3" fill="none" stroke="#222" stroke-width="1.8"/></svg><div style="position:absolute;left:1649.7px;top:203.56px;font-size:14.7px;line-height:14.7px;color:#111;font-weight:400;white-space:nowrap;">Тип элемента сцены</div><svg style="position:absolute;left:0px;top:0px;overflow:visible" width="1" height="1" viewBox="0 0 1 1"><circle cx="1651.8" cy="233.2" r="6.8" fill="none" stroke="#1a7fd4" stroke-width="1.5"/></svg><div style="position:absolute;left:1665.5px;top:226.66px;font-size:14.7px;line-height:14.7px;color:#111;font-weight:400;white-space:nowrap;">Дверь</div><svg style="position:absolute;left:0px;top:0px;overflow:visible" width="1" height="1" viewBox="0 0 1 1"><circle cx="1651.8" cy="253.2" r="6.8" fill="none" stroke="#1a7fd4" stroke-width="1.5"/></svg><div style="position:absolute;left:1665.5px;top:246.66px;font-size:14.7px;line-height:14.7px;color:#111;font-weight:400;white-space:nowrap;">Окно</div><svg style="position:absolute;left:0px;top:0px;overflow:visible" width="1" height="1" viewBox="0 0 1 1"><circle cx="1651.8" cy="273.2" r="6.8" fill="none" stroke="#1a7fd4" stroke-width="1.5"/></svg><div style="position:absolute;left:1665.5px;top:266.66px;font-size:14.7px;line-height:14.7px;color:#111;font-weight:400;white-space:nowrap;">Перекрытие</div><svg style="position:absolute;left:0px;top:0px;overflow:visible" width="1" height="1" viewBox="0 0 1 1"><circle cx="1651.8" cy="293.2" r="6.8" fill="none" stroke="#1a7fd4" stroke-width="1.5"/></svg><div style="position:absolute;left:1665.5px;top:286.66px;font-size:14.7px;line-height:14.7px;color:#111;font-weight:400;white-space:nowrap;">Подложка</div><svg style="position:absolute;left:0px;top:0px;overflow:visible" width="1" height="1" viewBox="0 0 1 1"><circle cx="1651.8" cy="313.2" r="6.8" fill="none" stroke="#1a7fd4" stroke-width="1.5"/></svg><div style="position:absolute;left:1665.5px;top:306.66px;font-size:14.7px;line-height:14.7px;color:#111;font-weight:400;white-space:nowrap;">Стена</div><svg style="position:absolute;left:0px;top:0px;overflow:visible" width="1" height="1" viewBox="0 0 1 1"><circle cx="1651.8" cy="333.2" r="6.8" fill="none" stroke="#1a7fd4" stroke-width="1.5"/></svg><div style="position:absolute;left:1665.5px;top:326.66px;font-size:14.7px;line-height:14.7px;color:#111;font-weight:400;white-space:nowrap;">Твердое тело</div><div style="position:absolute;left:16px;top:1002.84px;font-size:12px;line-height:12px;color:#111;font-weight:400;white-space:nowrap;">X:</div><div style="position:absolute;left:34px;top:1002.84px;font-size:12px;line-height:12px;color:#111;font-weight:400;white-space:nowrap;">4,148</div><div style="position:absolute;left:128px;top:1002.84px;font-size:12px;line-height:12px;color:#111;font-weight:400;white-space:nowrap;">Y:</div><div style="position:absolute;left:146.7px;top:1002.84px;font-size:12px;line-height:12px;color:#111;font-weight:400;white-space:nowrap;">11,52</div><div style="position:absolute;left:240px;top:1002.84px;font-size:12px;line-height:12px;color:#111;font-weight:400;white-space:nowrap;">Z:</div><div style="position:absolute;left:258.7px;top:1002.84px;font-size:12px;line-height:12px;color:#111;font-weight:400;white-space:nowrap;">14,8</div><div style="position:absolute;left:350px;top:998px;width:1px;height:18px;background:#666;"></div><svg style="position:absolute;left:0;top:0" width="1920" height="1020"><path d="M639.70 379.30 L1023.30 331.00 L1246.00 345.90 L1247.00 417.00 L1023.30 401.70 L650.00 448.60ZM1249.00 375.00 L1364.50 365.50 L1357.70 436.50 L1249.00 446.90ZM659.70 506.30 L1001.00 464.70 L1001.00 535.70 L669.70 577.00ZM1028.80 589.70 L1346.20 551.20 L1338.80 623.00 L1038.80 660.20ZM680.80 732.20 L1349.60 649.60 L1350.20 720.70 L681.70 804.20Z" fill="#52504b"/><polygon points="681.30,387.50 713.30,383.30 713.30,395.00 681.30,399.20" fill="#6b6a8a" /><polygon points="711.70,383.50 713.30,383.30 713.30,395.00 712.10,394.80" fill="#3b3a5e" /><polygon points="681.30,422.00 713.30,418.00 713.30,429.70 681.30,433.70" fill="#6b6a8a" /><polygon points="711.70,418.20 713.30,418.00 713.30,429.70 712.10,429.50" fill="#3b3a5e" /><polygon points="800.30,372.00 832.50,368.30 832.50,380.30 800.30,384.00" fill="#6b6a8a" /><polygon points="830.90,368.50 832.50,368.30 832.50,380.30 831.30,380.10" fill="#3b3a5e" /><polygon points="800.30,407.50 832.50,403.30 832.50,415.00 800.30,419.20" fill="#6b6a8a" /><polygon points="830.90,403.50 832.50,403.30 832.50,415.00 831.30,414.80" fill="#3b3a5e" /><polygon points="931.30,356.30 963.30,352.50 963.30,363.70 931.30,367.50" fill="#6b6a8a" /><polygon points="961.70,352.70 963.30,352.50 963.30,363.70 962.10,363.50" fill="#3b3a5e" /><polygon points="931.30,391.30 963.30,387.20 963.30,398.10 931.30,402.20" fill="#6b6a8a" /><polygon points="961.70,387.40 963.30,387.20 963.30,398.10 962.10,397.90" fill="#3b3a5e" /><polygon points="1067.00,347.00 1099.70,349.70 1099.70,361.40 1067.00,358.70" fill="#6b6a8a" /><polygon points="1098.10,349.90 1099.70,349.70 1099.70,361.40 1098.50,361.20" fill="#3b3a5e" /><polygon points="1067.00,382.00 1099.70,384.20 1099.70,395.50 1067.00,393.30" fill="#6b6a8a" /><polygon points="1098.10,384.40 1099.70,384.20 1099.70,395.50 1098.50,395.30" fill="#3b3a5e" /><polygon points="1163.40,353.30 1195.70,356.00 1195.70,368.00 1163.40,365.30" fill="#6b6a8a" /><polygon points="1194.10,356.20 1195.70,356.00 1195.70,368.00 1194.50,367.80" fill="#3b3a5e" /><polygon points="1163.40,388.30 1195.70,391.00 1195.70,402.70 1163.40,400.00" fill="#6b6a8a" /><polygon points="1194.10,391.20 1195.70,391.00 1195.70,402.70 1194.50,402.50" fill="#3b3a5e" /><polygon points="736.30,740.00 768.70,735.80 768.70,747.40 736.30,751.60" fill="#6b6a8a" /><polygon points="767.10,736.00 768.70,735.80 768.70,747.40 767.50,747.20" fill="#3b3a5e" /><polygon points="850.80,725.00 882.50,721.70 882.50,733.30 850.80,736.60" fill="#6b6a8a" /><polygon points="880.90,721.90 882.50,721.70 882.50,733.30 881.30,733.10" fill="#3b3a5e" /><polygon points="850.80,759.70 882.50,756.40 882.50,768.00 850.80,771.30" fill="#6b6a8a" /><polygon points="880.90,756.60 882.50,756.40 882.50,768.00 881.30,767.80" fill="#3b3a5e" /><polygon points="918.80,716.70 949.70,713.00 949.70,724.60 918.80,728.30" fill="#6b6a8a" /><polygon points="948.10,713.20 949.70,713.00 949.70,724.60 948.50,724.40" fill="#3b3a5e" /><polygon points="918.80,751.30 949.70,747.60 949.70,759.20 918.80,762.90" fill="#6b6a8a" /><polygon points="948.10,747.80 949.70,747.60 949.70,759.20 948.50,759.00" fill="#3b3a5e" /><polygon points="986.00,708.10 1017.50,704.00 1017.50,715.60 986.00,719.70" fill="#6b6a8a" /><polygon points="1015.90,704.20 1017.50,704.00 1017.50,715.60 1016.30,715.40" fill="#3b3a5e" /><polygon points="986.00,743.10 1017.50,739.00 1017.50,750.60 986.00,754.70" fill="#6b6a8a" /><polygon points="1015.90,739.20 1017.50,739.00 1017.50,750.60 1016.30,750.40" fill="#3b3a5e" /><polygon points="1053.70,699.80 1085.00,695.60 1085.00,707.20 1053.70,711.40" fill="#6b6a8a" /><polygon points="1083.40,695.80 1085.00,695.60 1085.00,707.20 1083.80,707.00" fill="#3b3a5e" /><polygon points="1053.70,734.40 1085.00,730.20 1085.00,741.80 1053.70,746.00" fill="#6b6a8a" /><polygon points="1083.40,730.40 1085.00,730.20 1085.00,741.80 1083.80,741.60" fill="#3b3a5e" /><polygon points="1121.50,691.20 1153.70,687.10 1153.70,698.70 1121.50,702.80" fill="#6b6a8a" /><polygon points="1152.10,687.30 1153.70,687.10 1153.70,698.70 1152.50,698.50" fill="#3b3a5e" /><polygon points="1121.50,726.20 1153.70,722.10 1153.70,733.70 1121.50,737.80" fill="#6b6a8a" /><polygon points="1152.10,722.30 1153.70,722.10 1153.70,733.70 1152.50,733.50" fill="#3b3a5e" /><polygon points="1189.20,682.80 1220.60,679.00 1220.60,690.60 1189.20,694.40" fill="#6b6a8a" /><polygon points="1219.00,679.20 1220.60,679.00 1220.60,690.60 1219.40,690.40" fill="#3b3a5e" /><polygon points="1189.20,717.30 1220.60,713.50 1220.60,725.10 1189.20,728.90" fill="#6b6a8a" /><polygon points="1219.00,713.70 1220.60,713.50 1220.60,725.10 1219.40,724.90" fill="#3b3a5e" /><polygon points="1256.90,674.60 1288.70,670.60 1288.70,682.20 1256.90,686.20" fill="#6b6a8a" /><polygon points="1287.10,670.80 1288.70,670.60 1288.70,682.20 1287.50,682.00" fill="#3b3a5e" /><polygon points="1256.90,709.20 1288.70,705.20 1288.70,716.80 1256.90,720.80" fill="#6b6a8a" /><polygon points="1287.10,705.40 1288.70,705.20 1288.70,716.80 1287.50,716.60" fill="#3b3a5e" /><polygon points="694.20,516.70 739.20,510.80 739.20,525.00 694.20,530.00" fill="#b8ac93" /><polygon points="694.20,530.00 739.20,525.00 739.20,534.20 694.20,539.70" fill="#8f826a" /><polygon points="694.20,551.70 739.20,545.80 739.20,567.50 694.20,573.30" fill="#b8ac93" /><polygon points="738.00,510.80 739.50,510.80 739.50,534.20 738.00,534.20" fill="#5e5440" opacity="0.6"/><polygon points="738.00,545.80 739.50,545.80 739.50,567.50 738.00,567.50" fill="#5e5440" opacity="0.6"/><polygon points="812.50,501.70 857.50,496.70 857.50,510.80 812.50,515.00" fill="#b8ac93" /><polygon points="812.50,515.00 857.50,510.80 857.50,520.00 812.50,525.00" fill="#8f826a" /><polygon points="812.50,536.70 857.50,530.80 857.50,553.30 812.50,559.20" fill="#b8ac93" /><polygon points="856.30,496.70 857.80,496.70 857.80,520.00 856.30,520.00" fill="#5e5440" opacity="0.6"/><polygon points="856.30,530.80 857.80,530.80 857.80,553.30 856.30,553.30" fill="#5e5440" opacity="0.6"/><polygon points="924.20,486.70 969.20,482.00 969.20,496.30 924.20,500.80" fill="#b8ac93" /><polygon points="924.20,500.80 969.20,496.30 969.20,505.80 924.20,510.80" fill="#8f826a" /><polygon points="924.20,521.70 969.20,516.70 969.20,540.00 924.20,545.50" fill="#b8ac93" /><polygon points="968.00,482.00 969.50,482.00 969.50,505.80 968.00,505.80" fill="#5e5440" opacity="0.6"/><polygon points="968.00,516.70 969.50,516.70 969.50,540.00 968.00,540.00" fill="#5e5440" opacity="0.6"/><polygon points="1068.80,633.30 1113.70,628.30 1113.70,650.80 1068.80,656.70" fill="#b8ac93" /><polygon points="1112.50,628.30 1114.10,628.30 1114.50,650.80 1112.90,650.80" fill="#4e4530" opacity="0.7"/><polygon points="1226.80,613.00 1271.50,608.30 1271.50,630.60 1226.80,636.70" fill="#b8ac93" /><polygon points="1270.30,608.30 1271.90,608.30 1272.30,630.60 1270.70,630.60" fill="#4e4530" opacity="0.7"/><polygon points="723.30,775.80 768.30,770.80 768.30,793.30 723.30,798.70" fill="#b8ac93" /><polygon points="767.10,770.80 768.70,770.80 769.10,793.30 767.50,793.30" fill="#4e4530" opacity="0.7"/><polygon points="856.70,595.00 963.70,582.00 978.00,678.30 870.80,691.70" fill="#a64fbd" /><polygon points="870.80,691.70 978.00,678.30 978.00,683.30 871.70,696.70" fill="#5a2a69" /><polygon points="856.70,595.00 857.70,595.00 871.80,691.70 870.80,691.70" fill="#6a3078" /><path d="M626.40 370.00 L682.00 734.20 L681.70 804.20 L625.00 440.00 L624.70 370.00ZM755.50 401.50 L768.00 486.00 L761.30 486.00 L754.00 436.00 L754.00 401.50ZM864.00 353.00 L882.00 472.00 L870.00 472.00 L861.70 423.30 L861.70 353.70ZM983.20 337.50 L1001.00 458.00 L988.30 458.00 L980.80 408.30 L980.80 339.20ZM999.50 464.70 L1034.00 677.00 L1022.50 678.00 L1000.00 535.80 L1000.00 464.70ZM775.70 492.00 L806.50 706.70 L795.80 706.70 L773.30 564.20 L773.30 492.00ZM1250.00 375.00 L1250.00 446.80 L1246.00 417.00 L1246.00 345.90ZM1379.40 356.00 L1379.60 425.00 L1350.30 720.70 L1348.80 651.60 L1375.50 361.50Z" fill="#0d0d0d"/><path d="M624.70 370.00 L1023.30 320.30 L1258.20 335.70 L1246.00 347.90 L1023.30 333.00 L641.70 381.30ZM1246.00 347.90 L1258.20 335.70 L1262.30 363.50 L1250.00 377.00ZM1250.00 377.00 L1262.30 363.50 L1368.00 354.00 L1379.40 356.00 L1362.50 367.50ZM1362.50 367.50 L1379.40 356.00 L1377.00 361.50 L1349.60 651.60 L1336.10 640.10ZM680.80 734.20 L692.50 720.00 L1336.10 640.10 L1349.60 651.60ZM624.70 370.00 L641.70 381.30 L692.50 720.00 L680.80 734.20ZM754.00 401.50 L764.80 400.40 L777.90 490.00 L767.10 490.00ZM862.50 353.00 L873.30 351.70 L890.50 475.00 L880.50 475.00ZM981.70 337.50 L991.70 336.70 L1043.30 676.70 L1032.50 676.70ZM773.40 490.00 L784.50 490.00 L816.70 706.00 L805.00 707.00ZM655.00 500.00 L1000.00 456.70 L1000.00 466.70 L661.70 508.30ZM1028.30 582.50 L1345.60 543.00 L1344.20 553.20 L1030.80 591.70Z" fill="#aeaba3"/></svg>
</body></html>
